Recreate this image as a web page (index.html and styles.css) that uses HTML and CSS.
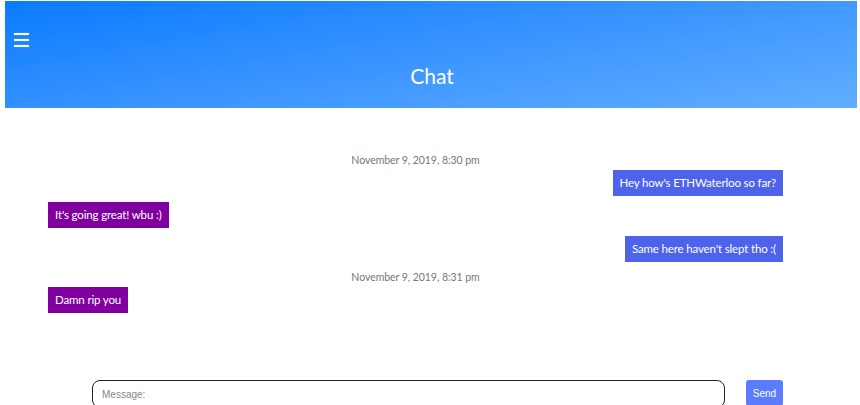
FILE: index.html
```html
<!DOCTYPE html>
<html>
<head>
<meta charset="utf-8">
<link rel="stylesheet" href="styles.css">
</head>
<body>
<div class="page">
  <header class="header">
    <div class="menu"><span></span><span></span><span></span></div>
    <h1 class="title">Chat</h1>
  </header>
  <main class="chat">
    <div class="stamp">November 9, 2019, 8:30 pm</div>
    <div class="row right"><div class="bubble me">Hey how's ETHWaterloo so far?</div></div>
    <div class="row left"><div class="bubble them">It's going great! wbu :)</div></div>
    <div class="row right gap"><div class="bubble me">Same here haven't slept tho :(</div></div>
    <div class="stamp second">November 9, 2019, 8:31 pm</div>
    <div class="row left"><div class="bubble them">Damn rip you</div></div>
  </main>
  <form class="composer">
    <input class="msg" type="text" placeholder="Message:">
    <button class="send" type="button">Send</button>
  </form>
</div>
</body>
</html>
```
FILE: styles.css
```css
html, body { margin: 0; padding: 0; background: #fff; }
body { font-family: Lato, "Open Sans", sans-serif; overflow: hidden; }
.page { padding: 1px 3px 0 5px; width: 852px; }
.header {
  height: 107px;
  background: linear-gradient(170deg, #0a7bff 0%, #3a94ff 50%, #60aeff 100%);
  position: relative;
  display: flex; align-items: flex-end; justify-content: center;
}
.menu { position: absolute; left: 9px; top: 32px; width: 15px; display: flex; flex-direction: column; gap: 4px; }
.menu span { display: block; height: 2px; background: #fff; box-shadow: 0 0 1px rgba(255,255,255,0.7); }
.title { margin: 0 0 19px 0; font-weight: 400; font-size: 21px; color: #fff; line-height: 26px; padding-left: 2px; }
.chat { padding: 45px 74px 0 43px; height: 227px; }
.stamp { text-align: center; font-size: 10.5px; letter-spacing: -0.05px; color: #777; line-height: 14px; margin-bottom: 3px; }
.stamp.second { margin-top: 8px; margin-bottom: 3px; }
.row { display: flex; margin-bottom: 6px; }
.row.right { justify-content: flex-end; }
.row.gap { margin-top: 8px; margin-bottom: 0; }
.bubble { font-size: 11.5px; letter-spacing: -0.15px; color: #fff; height: 26px; line-height: 26px; padding: 0 7px; box-sizing: border-box; white-space: nowrap; }
.me { background: #4e63ec; }
.them { background: #80009f; }
.composer { display: flex; align-items: flex-start; padding: 0 74px 0 87px; gap: 21px; }
.msg {
  flex: 1; height: 28px; box-sizing: border-box; border: 1.5px solid #222; border-radius: 8px;
  padding: 0 9px; font-family: "Liberation Sans", Arial, sans-serif; font-size: 10px; outline: none;
}
.msg::placeholder { color: #888; }
.send {
  width: 37px; height: 26px; border: 0; border-radius: 3px; background: #5b7cff; color: #fff;
  font-family: "Liberation Sans", Arial, sans-serif; font-size: 10px; padding: 0;
}
```
